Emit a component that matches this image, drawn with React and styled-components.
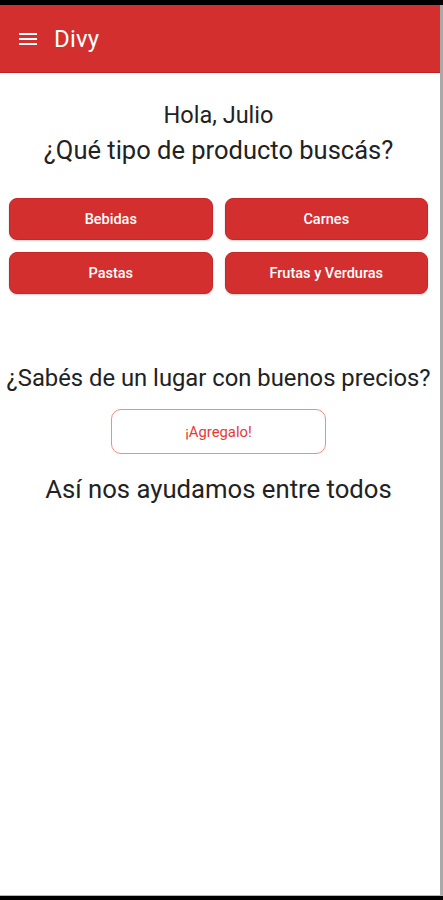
import React from 'react';
import styled, { createGlobalStyle } from 'styled-components';

const GlobalStyle = createGlobalStyle`
  html, body {
    margin: 0;
    padding: 0;
    background: #000;
  }
  * {
    box-sizing: border-box;
  }
`;

const Frame = styled.div`
  width: 443px;
  height: 900px;
  display: flex;
  flex-direction: column;
  background: #000;
  font-family: Roboto, "Liberation Sans", sans-serif;
`;

const StatusStrip = styled.div`
  height: 5px;
  background: #000;
`;

const Screen = styled.div`
  flex: 1;
  display: flex;
  flex-direction: column;
  background: #fff;
  border-right: 3px solid #a9a9a9;
  border-bottom: 1px solid #b5b5b5;
`;

const BottomStrip = styled.div`
  height: 4px;
  background: #000;
`;

const AppBar = styled.header`
  height: 68px;
  display: flex;
  align-items: center;
  gap: 17px;
  padding: 0 0 0 19px;
  background: #d32f2f;
  border-bottom: 1px solid #c21f1f;
  color: #fff;
`;

const MenuIcon = styled.svg`
  width: 18px;
  height: 12px;
  display: block;
`;

const AppTitle = styled.h1`
  margin: 0;
  font-size: 24px;
  font-weight: 400;
  letter-spacing: 0.2px;
`;

const Content = styled.main`
  display: flex;
  flex-direction: column;
  align-items: center;
  padding: 27px 12px 0 9px;
  color: #222;
`;

const Greeting = styled.div`
  font-size: 23.5px;
  line-height: 30px;
  text-align: center;
`;

const Question = styled.div`
  margin-top: 2px;
  font-size: 25.5px;
  line-height: 36px;
  text-align: center;
  white-space: nowrap;
`;

const CategoryGrid = styled.div`
  width: 100%;
  display: grid;
  grid-template-columns: 1fr 1fr;
  column-gap: 12px;
  row-gap: 12px;
  margin-top: 30px;
`;

const CategoryButton = styled.button`
  height: 42px;
  border: 1px solid #c62828;
  border-radius: 8px;
  background: #d32f2f;
  color: #fff;
  font-family: inherit;
  font-size: 14.5px;
  font-weight: 500;
  box-shadow: 0 1px 2px rgba(0, 0, 0, 0.2);
  cursor: pointer;
`;

const Prompt = styled.div`
  margin-top: 69px;
  font-size: 23.8px;
  line-height: 30px;
  text-align: center;
  white-space: nowrap;
`;

const OutlineButton = styled.button`
  width: 215px;
  height: 45px;
  margin-top: 16px;
  border: 1px solid #f28b8b;
  border-radius: 10px;
  background: #fff;
  color: #e53935;
  font-family: inherit;
  font-size: 14.8px;
  cursor: pointer;
`;

const Closing = styled.div`
  margin-top: 19px;
  font-size: 25.7px;
  line-height: 32px;
  text-align: center;
  white-space: nowrap;
`;

const categories = ['Bebidas', 'Carnes', 'Pastas', 'Frutas y Verduras'];

export default function App() {
  return (
    <>
      <GlobalStyle />
      <Frame>
        <StatusStrip />
        <Screen>
          <AppBar>
            <MenuIcon viewBox="0 0 18 12" aria-hidden="true">
              <rect x="0" y="0" width="18" height="2" fill="#fff" />
              <rect x="0" y="5" width="18" height="2" fill="#fff" />
              <rect x="0" y="10" width="18" height="2" fill="#fff" />
            </MenuIcon>
            <AppTitle>Divy</AppTitle>
          </AppBar>
          <Content>
            <Greeting>Hola, Julio</Greeting>
            <Question>¿Qué tipo de producto buscás?</Question>
            <CategoryGrid>
              {categories.map((name) => (
                <CategoryButton key={name}>{name}</CategoryButton>
              ))}
            </CategoryGrid>
            <Prompt>¿Sabés de un lugar con buenos precios?</Prompt>
            <OutlineButton>¡Agregalo!</OutlineButton>
            <Closing>Así nos ayudamos entre todos</Closing>
          </Content>
        </Screen>
        <BottomStrip />
      </Frame>
    </>
  );
}
